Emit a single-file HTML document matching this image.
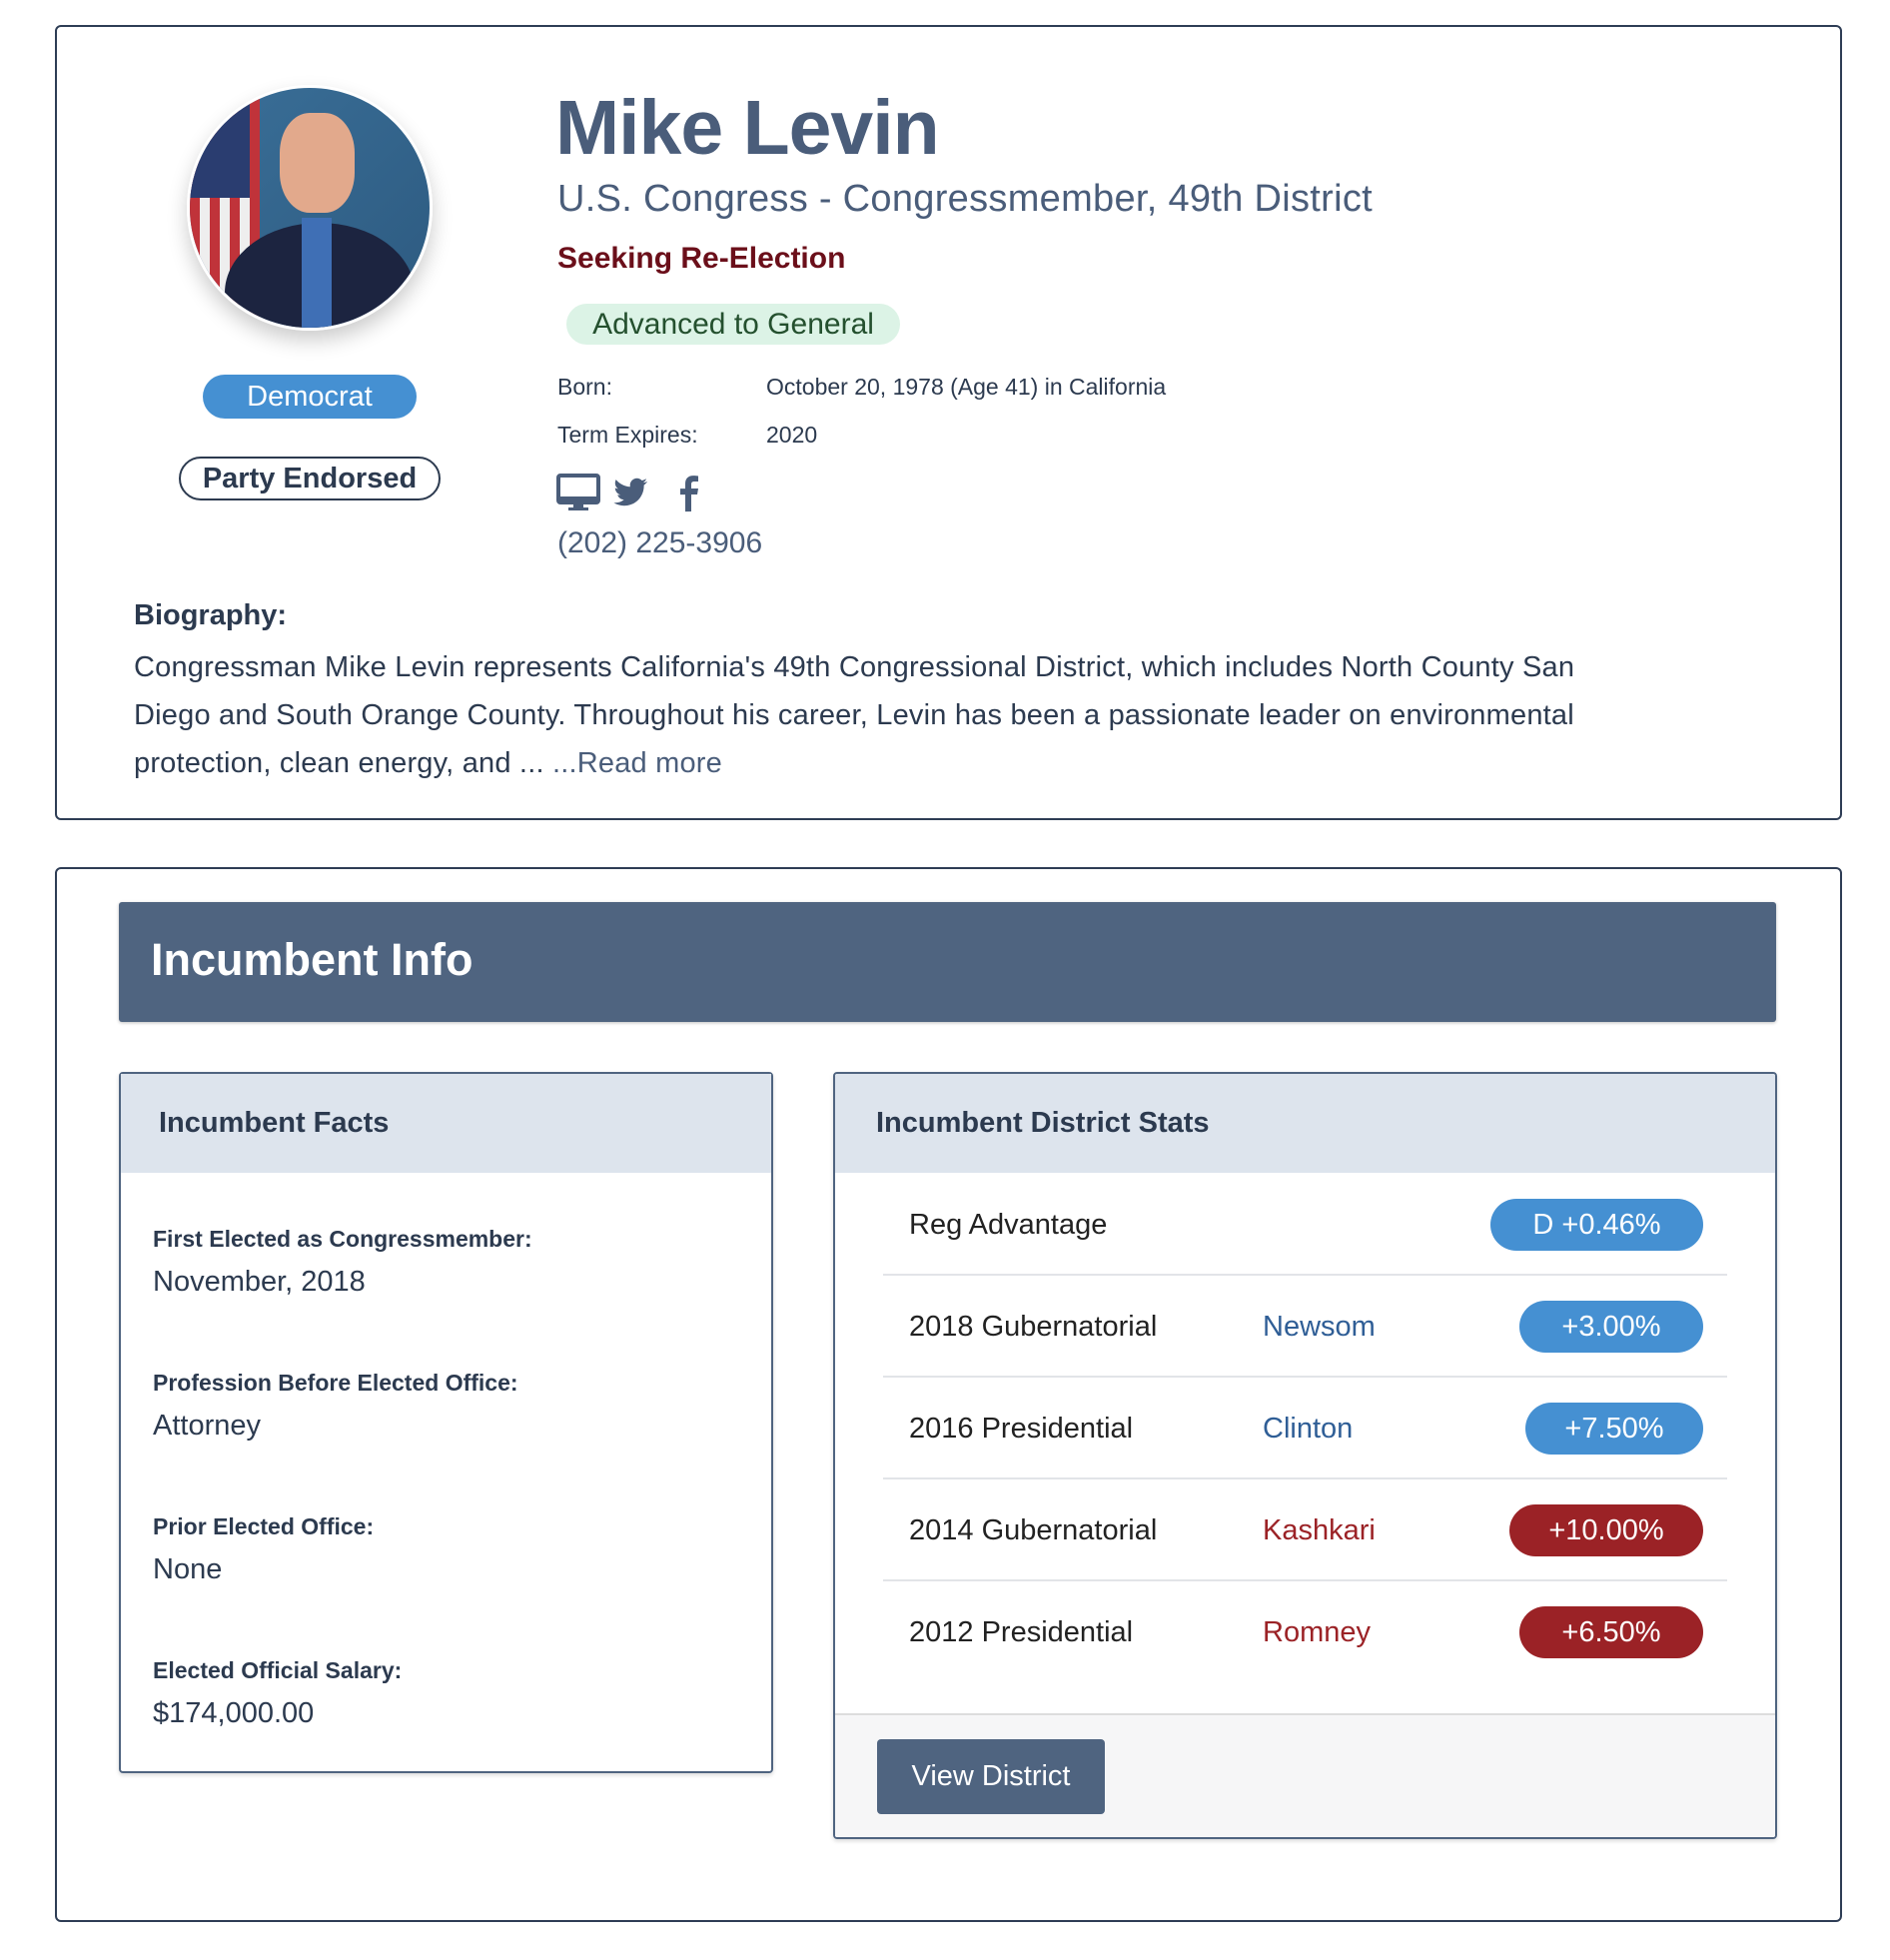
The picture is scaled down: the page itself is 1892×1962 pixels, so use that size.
<!DOCTYPE html>
<html><head><meta charset="utf-8"><style>
*{box-sizing:border-box;margin:0;padding:0}
body{width:1892px;height:1962px;background:#fff;font-family:"Liberation Sans",sans-serif;color:#2c3a4f;position:relative;overflow:hidden}
.a{position:absolute;white-space:nowrap}
.card{position:absolute;border:2px solid #2e3d55;border-radius:6px;background:#fff}
.pill{position:absolute;border-radius:30px;display:flex;align-items:center;justify-content:center;white-space:nowrap}
.lbl{position:absolute;left:32px;font-size:23px;font-weight:bold;color:#2c3a4f}
.val{position:absolute;left:32px;font-size:29px;color:#2c3a4f}
.row{position:absolute;left:48px;right:48px;height:102px;border-bottom:2px solid #e2e4e8}
.row .l{position:absolute;left:26px;top:0;line-height:102px;font-size:29px;color:#222}
.row .c{position:absolute;left:380px;top:0;line-height:102px;font-size:29px}
.row .p{position:absolute;right:24px;top:25px;height:52px;border-radius:28px;color:#fff;font-size:29px;display:flex;align-items:center;justify-content:center}
.bl{background:#4590d2}.rd{background:#9b2226}
</style></head><body>
<div class="card" style="left:55px;top:25px;width:1789px;height:796px"></div>
<div class="a" style="left:187px;top:85px;width:246px;height:246px;border-radius:50%;background:linear-gradient(135deg,#3a6f98,#2d5a80);overflow:hidden;box-shadow:0 10px 20px rgba(0,0,0,.2);border:3px solid #fff">
<div style="position:absolute;left:0;top:0;width:70px;height:246px;background:repeating-linear-gradient(90deg,#c0333a 0 10px,#eee 10px 20px)"></div>
<div style="position:absolute;left:0;top:0;width:60px;height:110px;background:#2a3d70"></div>
<div style="position:absolute;left:90px;top:25px;width:75px;height:100px;border-radius:40%;background:#e2a98c"></div>
<div style="position:absolute;left:35px;top:135px;width:190px;height:140px;border-radius:50% 50% 0 0;background:#1c2440"></div>
<div style="position:absolute;left:112px;top:130px;width:30px;height:120px;background:#3f6fb5"></div>
</div>
<div class="pill" style="left:203px;top:375px;width:214px;height:44px;background:#4590d2;color:#fff;font-size:29px">Democrat</div>
<div class="pill" style="left:179px;top:457px;width:262px;height:44px;border:2px solid #2c3a4f;color:#2c3a4f;font-size:29px;font-weight:bold">Party Endorsed</div>
<div class="a" style="left:556px;top:84px;font-size:77px;font-weight:bold;color:#4a5d7a;letter-spacing:-1px">Mike Levin</div>
<div class="a" style="left:558px;top:178px;font-size:38px;color:#4a5d7a;letter-spacing:0.3px">U.S. Congress - Congressmember, 49th District</div>
<div class="a" style="left:558px;top:242px;font-size:30px;font-weight:bold;color:#6b0f1a">Seeking Re-Election</div>
<div class="pill" style="left:567px;top:304px;width:334px;height:41px;background:#dcf3e6;color:#24502e;font-size:30px">Advanced to General</div>
<div class="a" style="left:558px;top:374px;font-size:23px">Born:</div>
<div class="a" style="left:767px;top:374px;font-size:23px">October 20, 1978 (Age 41) in California</div>
<div class="a" style="left:558px;top:422px;font-size:23px">Term Expires:</div>
<div class="a" style="left:767px;top:422px;font-size:23px">2020</div>
<svg class="a" style="left:557px;top:473px" width="150" height="40" viewBox="0 0 150 40">
<rect x="2" y="3" width="40" height="27" rx="2" fill="none" stroke="#4a5d7a" stroke-width="4"/><rect x="2" y="24" width="40" height="6" fill="#4a5d7a"/><rect x="17" y="30" width="10" height="6" fill="#4a5d7a"/><rect x="12" y="35" width="20" height="3" fill="#4a5d7a"/>
<path d="M91 9c-1.3.6-2.6 1-4 1.1 1.4-.9 2.5-2.2 3-3.8-1.3.8-2.8 1.3-4.4 1.700-1.3-1.4-3.100-2.200-5-2.200-3.800 0-6.900 3.100-6.900 6.900 0 .5.100 1.100.200 1.600-5.700-.300-10.800-3-14.200-7.200-.600 1-.900 2.200-.900 3.500 0 2.400 1.200 4.500 3.100 5.700-1.100 0-2.200-.300-3.100-.900v.100c0 3.300 2.400 6.100 5.500 6.800-.600.200-1.200.200-1.800.200-.400 0-.900 0-1.300-.100.900 2.700 3.400 4.700 6.400 4.800-2.400 1.900-5.300 3-8.600 3-.600 0-1.100 0-1.700-.100 3.100 2 6.700 3.100 10.600 3.100 12.700 0 19.700-10.500 19.700-19.700v-.900c1.400-1 2.500-2.200 3.400-3.500z" fill="#4a5d7a"/>
<path d="M135 39V22h6l1-6h-7v-4c0-2 .7-3 3-3h4V3.500c-1-.2-3-.4-5-.4-5 0-8 3-8 8v5h-5v6h5v17z" fill="#4a5d7a"/>
</svg>
<div class="a" style="left:558px;top:527px;font-size:30px;color:#4a5d7a">(202) 225-3906</div>
<div class="a" style="left:134px;top:600px;font-size:29px;font-weight:bold">Biography:</div>
<div class="a" style="left:134px;top:644px;font-size:29px;line-height:48px;letter-spacing:0.2px">Congressman Mike Levin represents California's 49th Congressional District, which includes North County San<br>Diego and South Orange County. Throughout his career, Levin has been a passionate leader on environmental<br>protection, clean energy, and ... <span style="color:#4a5d7a">...Read more</span></div>

<div class="card" style="left:55px;top:868px;width:1789px;height:1056px"></div>
<div class="a" style="left:119px;top:903px;width:1659px;height:120px;background:#4f6480;border-radius:3px;box-shadow:0 1px 3px rgba(0,0,0,.25)"></div>
<div class="a" style="left:151px;top:935px;font-size:45px;font-weight:bold;color:#fff">Incumbent Info</div>

<div class="a" style="left:119px;top:1073px;width:655px;height:702px;border:2px solid #4f6480;border-radius:4px;box-shadow:0 2px 4px rgba(0,0,0,.15)">
<div style="position:absolute;left:0;top:0;right:0;height:99px;background:#dde4ed"></div>
<div style="position:absolute;left:38px;top:33px;font-size:29px;font-weight:bold">Incumbent Facts</div>
<div class="lbl" style="top:152px">First Elected as Congressmember:</div><div class="val" style="top:192px">November, 2018</div>
<div class="lbl" style="top:296px">Profession Before Elected Office:</div><div class="val" style="top:336px">Attorney</div>
<div class="lbl" style="top:440px">Prior Elected Office:</div><div class="val" style="top:480px">None</div>
<div class="lbl" style="top:584px">Elected Official Salary:</div><div class="val" style="top:624px">$174,000.00</div>
</div>

<div class="a" style="left:834px;top:1073px;width:945px;height:768px;border:2px solid #4f6480;border-radius:4px;box-shadow:0 2px 4px rgba(0,0,0,.15);overflow:hidden">
<div style="position:absolute;left:0;top:0;right:0;height:99px;background:#dde4ed"></div>
<div style="position:absolute;left:41px;top:33px;font-size:29px;font-weight:bold">Incumbent District Stats</div>
<div class="row" style="top:100px"><div class="l">Reg Advantage</div><div class="p bl" style="width:213px">D +0.46%</div></div>
<div class="row" style="top:202px"><div class="l">2018 Gubernatorial</div><div class="c" style="color:#2f5e96">Newsom</div><div class="p bl" style="width:184px">+3.00%</div></div>
<div class="row" style="top:304px"><div class="l">2016 Presidential</div><div class="c" style="color:#2f5e96">Clinton</div><div class="p bl" style="width:178px">+7.50%</div></div>
<div class="row" style="top:406px"><div class="l">2014 Gubernatorial</div><div class="c" style="color:#9b2226">Kashkari</div><div class="p rd" style="width:194px">+10.00%</div></div>
<div class="row" style="top:508px;border-bottom:none"><div class="l">2012 Presidential</div><div class="c" style="color:#9b2226">Romney</div><div class="p rd" style="width:184px">+6.50%</div></div>
<div style="position:absolute;left:0;right:0;top:640px;bottom:0;background:#f6f6f7;border-top:2px solid #ddd"></div>
<div style="position:absolute;left:42px;top:666px;width:228px;height:75px;background:#4f6480;border-radius:4px;color:#fff;font-size:29px;display:flex;align-items:center;justify-content:center">View District</div>
</div>
</body></html>
